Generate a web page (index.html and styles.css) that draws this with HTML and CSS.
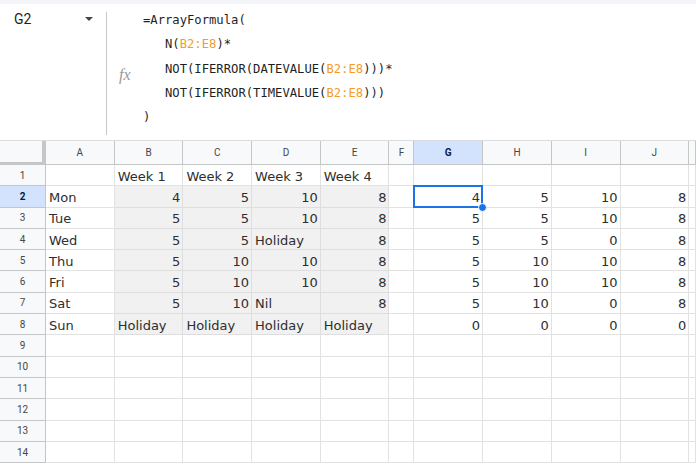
FILE: index.html
```html
<!DOCTYPE html>
<html lang="en">
<head>
<meta charset="utf-8">
<title>Sheet</title>
<link rel="stylesheet" href="styles.css">
</head>
<body>
<div class="topbar">
  <div class="namebox"><span class="ref">G2</span><span class="caret"></span></div>
  <div class="divider"></div>
  <div class="fx">fx</div>
  <div class="formula"><div class="fl">=ArrayFormula(</div><div class="fl">   N(<span class="rng">B2:E8</span>)*</div><div class="fl">   NOT(IFERROR(DATEVALUE(<span class="rng">B2:E8</span>)))*</div><div class="fl">   NOT(IFERROR(TIMEVALUE(<span class="rng">B2:E8</span>)))</div><div class="fl">)</div></div>
</div>
<div class="sheet">
  <div class="corner"></div><div class="h">A</div><div class="h">B</div><div class="h">C</div><div class="h">D</div><div class="h">E</div><div class="h">F</div><div class="h hs">G</div><div class="h">H</div><div class="h">I</div><div class="h">J</div><div class="h"></div>

  <div class="rh">1</div><div class="c"></div><div class="c">Week 1</div><div class="c">Week 2</div><div class="c">Week 3</div><div class="c">Week 4</div><div class="c"></div><div class="c"></div><div class="c"></div><div class="c"></div><div class="c"></div><div class="c"></div>

  <div class="rh rs">2</div><div class="c">Mon</div><div class="c g n">4</div><div class="c g n">5</div><div class="c g n">10</div><div class="c g n">8</div><div class="c"></div><div class="c n sel">4<span class="handle"></span></div><div class="c n">5</div><div class="c n">10</div><div class="c n">8</div><div class="c"></div>

  <div class="rh">3</div><div class="c">Tue</div><div class="c g n">5</div><div class="c g n">5</div><div class="c g n">10</div><div class="c g n">8</div><div class="c"></div><div class="c n">5</div><div class="c n">5</div><div class="c n">10</div><div class="c n">8</div><div class="c"></div>

  <div class="rh">4</div><div class="c">Wed</div><div class="c g n">5</div><div class="c g n">5</div><div class="c g">Holiday</div><div class="c g n">8</div><div class="c"></div><div class="c n">5</div><div class="c n">5</div><div class="c n">0</div><div class="c n">8</div><div class="c"></div>

  <div class="rh">5</div><div class="c">Thu</div><div class="c g n">5</div><div class="c g n">10</div><div class="c g n">10</div><div class="c g n">8</div><div class="c"></div><div class="c n">5</div><div class="c n">10</div><div class="c n">10</div><div class="c n">8</div><div class="c"></div>

  <div class="rh">6</div><div class="c">Fri</div><div class="c g n">5</div><div class="c g n">10</div><div class="c g n">10</div><div class="c g n">8</div><div class="c"></div><div class="c n">5</div><div class="c n">10</div><div class="c n">10</div><div class="c n">8</div><div class="c"></div>

  <div class="rh">7</div><div class="c">Sat</div><div class="c g n">5</div><div class="c g n">10</div><div class="c g">Nil</div><div class="c g n">8</div><div class="c"></div><div class="c n">5</div><div class="c n">10</div><div class="c n">0</div><div class="c n">8</div><div class="c"></div>

  <div class="rh">8</div><div class="c">Sun</div><div class="c g">Holiday</div><div class="c g">Holiday</div><div class="c g">Holiday</div><div class="c g">Holiday</div><div class="c"></div><div class="c n">0</div><div class="c n">0</div><div class="c n">0</div><div class="c n">0</div><div class="c"></div>

  <div class="rh">9</div><div class="c"></div><div class="c"></div><div class="c"></div><div class="c"></div><div class="c"></div><div class="c"></div><div class="c"></div><div class="c"></div><div class="c"></div><div class="c"></div><div class="c"></div>
  <div class="rh">10</div><div class="c"></div><div class="c"></div><div class="c"></div><div class="c"></div><div class="c"></div><div class="c"></div><div class="c"></div><div class="c"></div><div class="c"></div><div class="c"></div><div class="c"></div>
  <div class="rh">11</div><div class="c"></div><div class="c"></div><div class="c"></div><div class="c"></div><div class="c"></div><div class="c"></div><div class="c"></div><div class="c"></div><div class="c"></div><div class="c"></div><div class="c"></div>
  <div class="rh">12</div><div class="c"></div><div class="c"></div><div class="c"></div><div class="c"></div><div class="c"></div><div class="c"></div><div class="c"></div><div class="c"></div><div class="c"></div><div class="c"></div><div class="c"></div>
  <div class="rh">13</div><div class="c"></div><div class="c"></div><div class="c"></div><div class="c"></div><div class="c"></div><div class="c"></div><div class="c"></div><div class="c"></div><div class="c"></div><div class="c"></div><div class="c"></div>
  <div class="rh">14</div><div class="c"></div><div class="c"></div><div class="c"></div><div class="c"></div><div class="c"></div><div class="c"></div><div class="c"></div><div class="c"></div><div class="c"></div><div class="c"></div><div class="c"></div>
</div>
</body>
</html>
```

FILE: styles.css
```css
* { box-sizing: border-box; }
html, body {
  margin: 0;
  padding: 0;
  background: #ffffff;
  overflow: hidden;
}
body {
  width: 696px;
  height: 464px;
  font-family: "DejaVu Sans", Verdana, sans-serif;
}

/* formula bar */
.topbar {
  display: flex;
  height: 141px;
  border-top: 4px solid #f3f5f8;
  border-bottom: 1px solid #dadce0;
  background: #fff;
}
.namebox {
  width: 106px;
  display: flex;
  justify-content: space-between;
  align-items: flex-start;
  padding: 5px 13px 0 14px;
}
.ref {
  font-family: Roboto, "Liberation Sans", sans-serif;
  font-size: 14px;
  line-height: 20px;
  color: #1f1f1f;
}
.caret {
  margin-top: 8px;
  width: 0;
  height: 0;
  border-left: 4px solid transparent;
  border-right: 4px solid transparent;
  border-top: 4px solid #444746;
}
.divider {
  width: 1px;
  background: #c7c7c7;
  margin: 8px 0 5px;
}
.fx {
  width: 36px;
  padding: 61px 0 0 12px;
  font-family: "Liberation Serif", serif;
  font-style: italic;
  font-size: 16px;
  line-height: 20px;
  color: #9a9a9a;
}
.formula {
  padding-top: 4px;
  font-family: "DejaVu Sans Mono", monospace;
  font-size: 12.2px;
  line-height: 24.25px;
  color: #1f1f1f;
  white-space: pre;
}
.rng { color: #f29c2b; }

/* grid */
.sheet {
  display: grid;
  grid-template-columns: 46px repeat(5, 68.7px) 25px repeat(4, 68.7px) 1fr;
  grid-template-rows: 24px repeat(14, 21.3px);
}
.corner {
  background: #f8f9fa;
  border-right: 4px solid #c4c7c5;
  border-bottom: 3px solid #c4c7c5;
}
.h {
  background: #f8f9fa;
  border-right: 1px solid #c4c7c5;
  border-bottom: 1px solid #c4c7c5;
  font-family: Roboto, "Liberation Sans", sans-serif;
  font-size: 10px;
  color: #444746;
  display: flex;
  align-items: center;
  justify-content: center;
}
.hs {
  background: #d3e3fd;
  color: #041e49;
  font-weight: 700;
}
.rh {
  background: #f8f9fa;
  border-right: 1px solid #c4c7c5;
  border-bottom: 1px solid #c4c7c5;
  font-family: Roboto, "Liberation Sans", sans-serif;
  font-size: 10px;
  color: #444746;
  display: flex;
  align-items: center;
  justify-content: center;
}
.rs {
  background: #d3e3fd;
  color: #041e49;
  font-weight: 700;
}
.c {
  border-right: 1px solid #e2e2e2;
  border-bottom: 1px solid #e2e2e2;
  font-size: 13px;
  color: #2e2e2e;
  padding: 2px 3px 0 3px;
  display: flex;
  align-items: center;
  white-space: nowrap;
}
.g { background: #f1f1f1; border-color: #dedede; }
.n { justify-content: flex-end; padding-right: 2px; }
.sel {
  position: relative;
}
.sel::after {
  content: "";
  position: absolute;
  left: -1px;
  top: -1px;
  right: -1px;
  bottom: -1px;
  border: 2px solid #1a73e8;
}
.handle {
  position: absolute;
  right: -5px;
  bottom: -5px;
  width: 9px;
  height: 9px;
  border-radius: 50%;
  background: #1a73e8;
  border: 1px solid #ffffff;
  z-index: 2;
}
```
